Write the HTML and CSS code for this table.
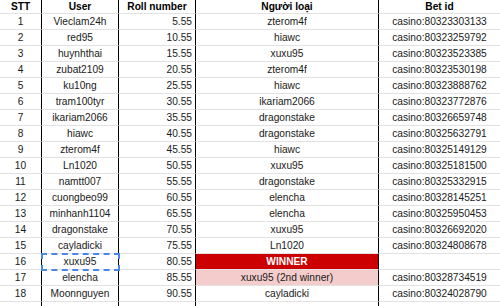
FILE: index.html
```html
<!DOCTYPE html>
<html>
<head>
<meta charset="utf-8">
<link rel="stylesheet" href="styles.css">
</head>
<body>
<div class="sheet">
  <div class="c c1 hd">STT</div><div class="c c2 hd">User</div><div class="c c3 hd">Roll number</div><div class="c c4 hd">Người loại</div><div class="c c5 hd">Bet id</div>

  <div class="c c1">1</div><div class="c c2">Vieclam24h</div><div class="c c3">5.55</div><div class="c c4">zterom4f</div><div class="c c5">casino:80323303133</div>
  <div class="c c1">2</div><div class="c c2">red95</div><div class="c c3">10.55</div><div class="c c4">hiawc</div><div class="c c5">casino:80323259792</div>
  <div class="c c1">3</div><div class="c c2">huynhthai</div><div class="c c3">15.55</div><div class="c c4">xuxu95</div><div class="c c5">casino:80323523385</div>
  <div class="c c1">4</div><div class="c c2">zubat2109</div><div class="c c3">20.55</div><div class="c c4">zterom4f</div><div class="c c5">casino:80323530198</div>
  <div class="c c1">5</div><div class="c c2">ku10ng</div><div class="c c3">25.55</div><div class="c c4">hiawc</div><div class="c c5">casino:80323888762</div>
  <div class="c c1">6</div><div class="c c2">tram100tyr</div><div class="c c3">30.55</div><div class="c c4">ikariam2066</div><div class="c c5">casino:80323772876</div>
  <div class="c c1">7</div><div class="c c2">ikariam2066</div><div class="c c3">35.55</div><div class="c c4">dragonstake</div><div class="c c5">casino:80326659748</div>
  <div class="c c1">8</div><div class="c c2">hiawc</div><div class="c c3">40.55</div><div class="c c4">dragonstake</div><div class="c c5">casino:80325632791</div>
  <div class="c c1">9</div><div class="c c2">zterom4f</div><div class="c c3">45.55</div><div class="c c4">hiawc</div><div class="c c5">casino:80325149129</div>
  <div class="c c1">10</div><div class="c c2">Ln1020</div><div class="c c3">50.55</div><div class="c c4">xuxu95</div><div class="c c5">casino:80325181500</div>
  <div class="c c1">11</div><div class="c c2">namtt007</div><div class="c c3">55.55</div><div class="c c4">dragonstake</div><div class="c c5">casino:80325332915</div>
  <div class="c c1">12</div><div class="c c2">cuongbeo99</div><div class="c c3">60.55</div><div class="c c4">elencha</div><div class="c c5">casino:80328145251</div>
  <div class="c c1">13</div><div class="c c2">minhanh1104</div><div class="c c3">65.55</div><div class="c c4">elencha</div><div class="c c5">casino:80325950453</div>
  <div class="c c1">14</div><div class="c c2">dragonstake</div><div class="c c3">70.55</div><div class="c c4">xuxu95</div><div class="c c5">casino:80326692020</div>
  <div class="c c1">15</div><div class="c c2">cayladicki</div><div class="c c3">75.55</div><div class="c c4">Ln1020</div><div class="c c5">casino:80324808678</div>
  <div class="c c1">16</div><div class="c c2 selected">xuxu95</div><div class="c c3">80.55</div><div class="c c4 winner">WINNER</div><div class="c c5"></div>
  <div class="c c1">17</div><div class="c c2">elencha</div><div class="c c3">85.55</div><div class="c c4 second">xuxu95 (2nd winner)</div><div class="c c5">casino:80328734519</div>
  <div class="c c1">18</div><div class="c c2">Moonnguyen</div><div class="c c3">90.55</div><div class="c c4">cayladicki</div><div class="c c5">casino:80324028790</div>
  <div class="c c1"></div><div class="c c2"></div><div class="c c3"></div><div class="c c4"></div><div class="c c5"></div>
</div>
</body>
</html>
```

FILE: styles.css
```css
html, body {
  margin: 0;
  padding: 0;
  background: #fff;
}

body {
  font-family: "Liberation Sans", Arial, sans-serif;
  font-size: 10.2px;
  color: #1a1a1a;
  overflow: hidden;
}

.sheet {
  display: grid;
  grid-template-columns: 42px 77px 77px 183px 121px;
  grid-template-rows: 14px;
  grid-auto-rows: 16px;
  width: 500px;
}

.c {
  box-sizing: border-box;
  border-bottom: 1px solid #e2e2e2;
  text-align: center;
  padding-top: 1px;
  line-height: 14px;
  white-space: nowrap;
  overflow: hidden;
}

.c1, .c2, .c3, .c4 {
  border-right: 1px solid #000;
}

.c3 {
  text-align: right;
  padding-right: 3px;
}

.hd {
  font-weight: bold;
  padding-top: 0;
  line-height: 13px;
  color: #000;
}

.c3.hd {
  text-align: center;
  padding-right: 0;
}

.winner {
  background: #cc0000;
  color: #fff;
  font-weight: bold;
}

.second {
  background: #f4cccc;
}

.selected {
  position: relative;
  overflow: visible;
}

.selected::after {
  content: "";
  position: absolute;
  left: -1px;
  top: -1px;
  right: -2px;
  bottom: -2px;
  border: 2px dashed #4a86e8;
}
```
